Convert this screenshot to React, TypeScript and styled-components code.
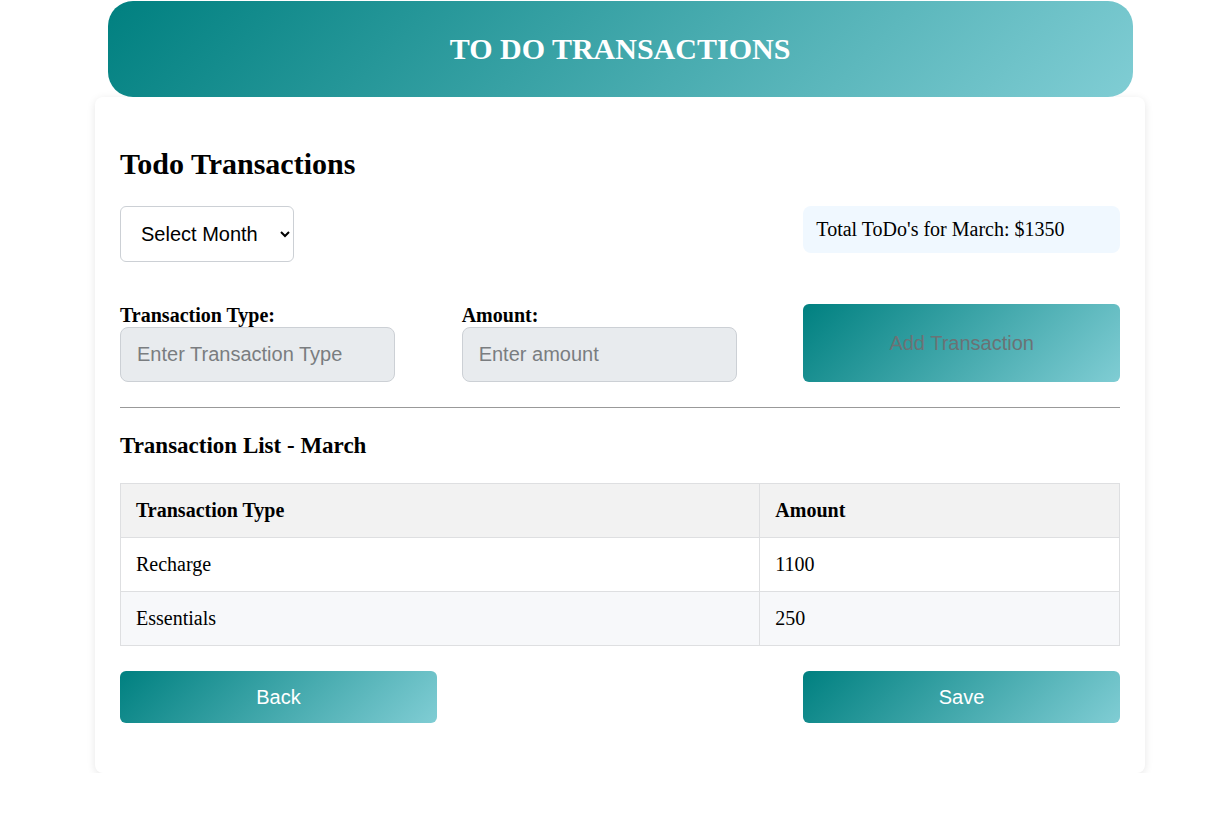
import { useState } from "react";
import styled, { createGlobalStyle } from "styled-components";

const GlobalStyle = createGlobalStyle`
  body {
    margin: 0;
    background: #ffffff;
    font-family: "Liberation Serif", "Times New Roman", serif;
  }
`;

const gradient = "linear-gradient(135deg, #008080 0%, #80cdd4 100%)";

const Page = styled.div`
  width: 1050px;
  margin-left: 95px;
  padding-top: 1px;
`;

const Header = styled.header`
  width: 1025px;
  height: 96px;
  margin: 0 auto;
  border-radius: 25px;
  background: ${gradient};
  display: flex;
  align-items: center;
  justify-content: center;
  position: relative;
  z-index: 1;
`;

const HeaderTitle = styled.h1`
  margin: 0;
  color: #ffffff;
  font-size: 30px;
  font-weight: bold;
`;

const Card = styled.div`
  background: #ffffff;
  border-radius: 8px;
  box-shadow: 0 2px 8px rgba(0, 0, 0, 0.1);
  padding: 40px 25px 50px;
`;

const Title = styled.h2`
  margin: 0 0 15px;
  font-size: 30px;
  line-height: 54px;
  font-weight: bold;
`;

const Grid = styled.div<{ $gap?: number }>`
  display: grid;
  grid-template-columns: repeat(3, 1fr);
  column-gap: 25px;
  align-items: start;
  margin-bottom: ${(p) => p.$gap ?? 0}px;
`;

const MonthSelect = styled.select`
  width: 174px;
  height: 56px;
  padding: 0 14px 0 16px;
  font-family: "Liberation Sans", Arial, sans-serif;
  font-size: 20px;
  color: #000;
  background: #fff;
  border: 1px solid #ccd0d5;
  border-radius: 6px;
`;

const TotalBox = styled.div`
  grid-column: 3;
  background: #f0f8ff;
  border-radius: 8px;
  padding: 12px 13px;
  font-size: 20px;
  line-height: 23px;
`;

const Field = styled.div`
  display: flex;
  flex-direction: column;
`;

const Label = styled.label`
  font-size: 20px;
  font-weight: bold;
  line-height: 23px;
`;

const TextInput = styled.input`
  box-sizing: border-box;
  width: 275px;
  height: 55px;
  padding: 0 16px;
  font-family: "Liberation Sans", Arial, sans-serif;
  font-size: 20px;
  background: #e8ebee;
  border: 1px solid #ccd0d5;
  border-radius: 8px;
  &::placeholder {
    color: #7a7d80;
  }
`;

const GradientButton = styled.button<{ $height: number; $muted?: boolean }>`
  width: 100%;
  height: ${(p) => p.$height}px;
  border: none;
  border-radius: 6px;
  background: ${gradient};
  color: ${(p) => (p.$muted ? "#6b7275" : "#ffffff")};
  font-family: "Liberation Sans", Arial, sans-serif;
  font-size: 20px;
  cursor: pointer;
`;

const Divider = styled.hr`
  margin: 25px 0 0;
  border: none;
  border-top: 1px solid #999;
`;

const ListTitle = styled.h3`
  margin: 26px 0 25px;
  font-size: 23px;
  line-height: 24px;
  font-weight: bold;
`;

const Table = styled.table`
  width: 100%;
  border-collapse: collapse;
  font-size: 20px;
`;

const Th = styled.th`
  text-align: left;
  background: #f2f2f2;
  border: 1px solid #dedfe1;
  padding: 0 15px;
  height: 53px;
  font-weight: bold;
`;

const Td = styled.td`
  border: 1px solid #dedfe1;
  padding: 0 15px;
  height: 53px;
`;

const Tr = styled.tr<{ $alt?: boolean }>`
  background: ${(p) => (p.$alt ? "#f7f8fa" : "#ffffff")};
`;

const Actions = styled.div`
  display: flex;
  justify-content: space-between;
  margin-top: 25px;
`;

const ActionSlot = styled.div`
  width: 317px;
`;

const rows = [
  { type: "Recharge", amount: 1100 },
  { type: "Essentials", amount: 250 },
];

export default function App() {
  const [type, setType] = useState("");
  const [amount, setAmount] = useState("");

  const total = rows.reduce((s, r) => s + r.amount, 0);

  return (
    <>
      <GlobalStyle />
      <Page>
        <Header>
          <HeaderTitle>TO DO TRANSACTIONS</HeaderTitle>
        </Header>
        <Card>
          <Title>Todo Transactions</Title>
          <Grid $gap={42}>
            <MonthSelect defaultValue="">
              <option value="">Select Month</option>
              <option value="March">March</option>
            </MonthSelect>
            <TotalBox>Total ToDo's for March: ${total}</TotalBox>
          </Grid>
          <Grid>
            <Field>
              <Label>Transaction Type:</Label>
              <TextInput
                placeholder="Enter Transaction Type"
                value={type}
                onChange={(e) => setType(e.target.value)}
              />
            </Field>
            <Field>
              <Label>Amount:</Label>
              <TextInput
                placeholder="Enter amount"
                value={amount}
                onChange={(e) => setAmount(e.target.value)}
              />
            </Field>
            <GradientButton $height={78} $muted>
              Add Transaction
            </GradientButton>
          </Grid>
          <Divider />
          <ListTitle>Transaction List - March</ListTitle>
          <Table>
            <thead>
              <tr>
                <Th style={{ width: "64%" }}>Transaction Type</Th>
                <Th>Amount</Th>
              </tr>
            </thead>
            <tbody>
              {rows.map((r, i) => (
                <Tr key={r.type} $alt={i % 2 === 1}>
                  <Td>{r.type}</Td>
                  <Td>{r.amount}</Td>
                </Tr>
              ))}
            </tbody>
          </Table>
          <Actions>
            <ActionSlot>
              <GradientButton $height={52}>Back</GradientButton>
            </ActionSlot>
            <ActionSlot>
              <GradientButton $height={52}>Save</GradientButton>
            </ActionSlot>
          </Actions>
        </Card>
      </Page>
    </>
  );
}
